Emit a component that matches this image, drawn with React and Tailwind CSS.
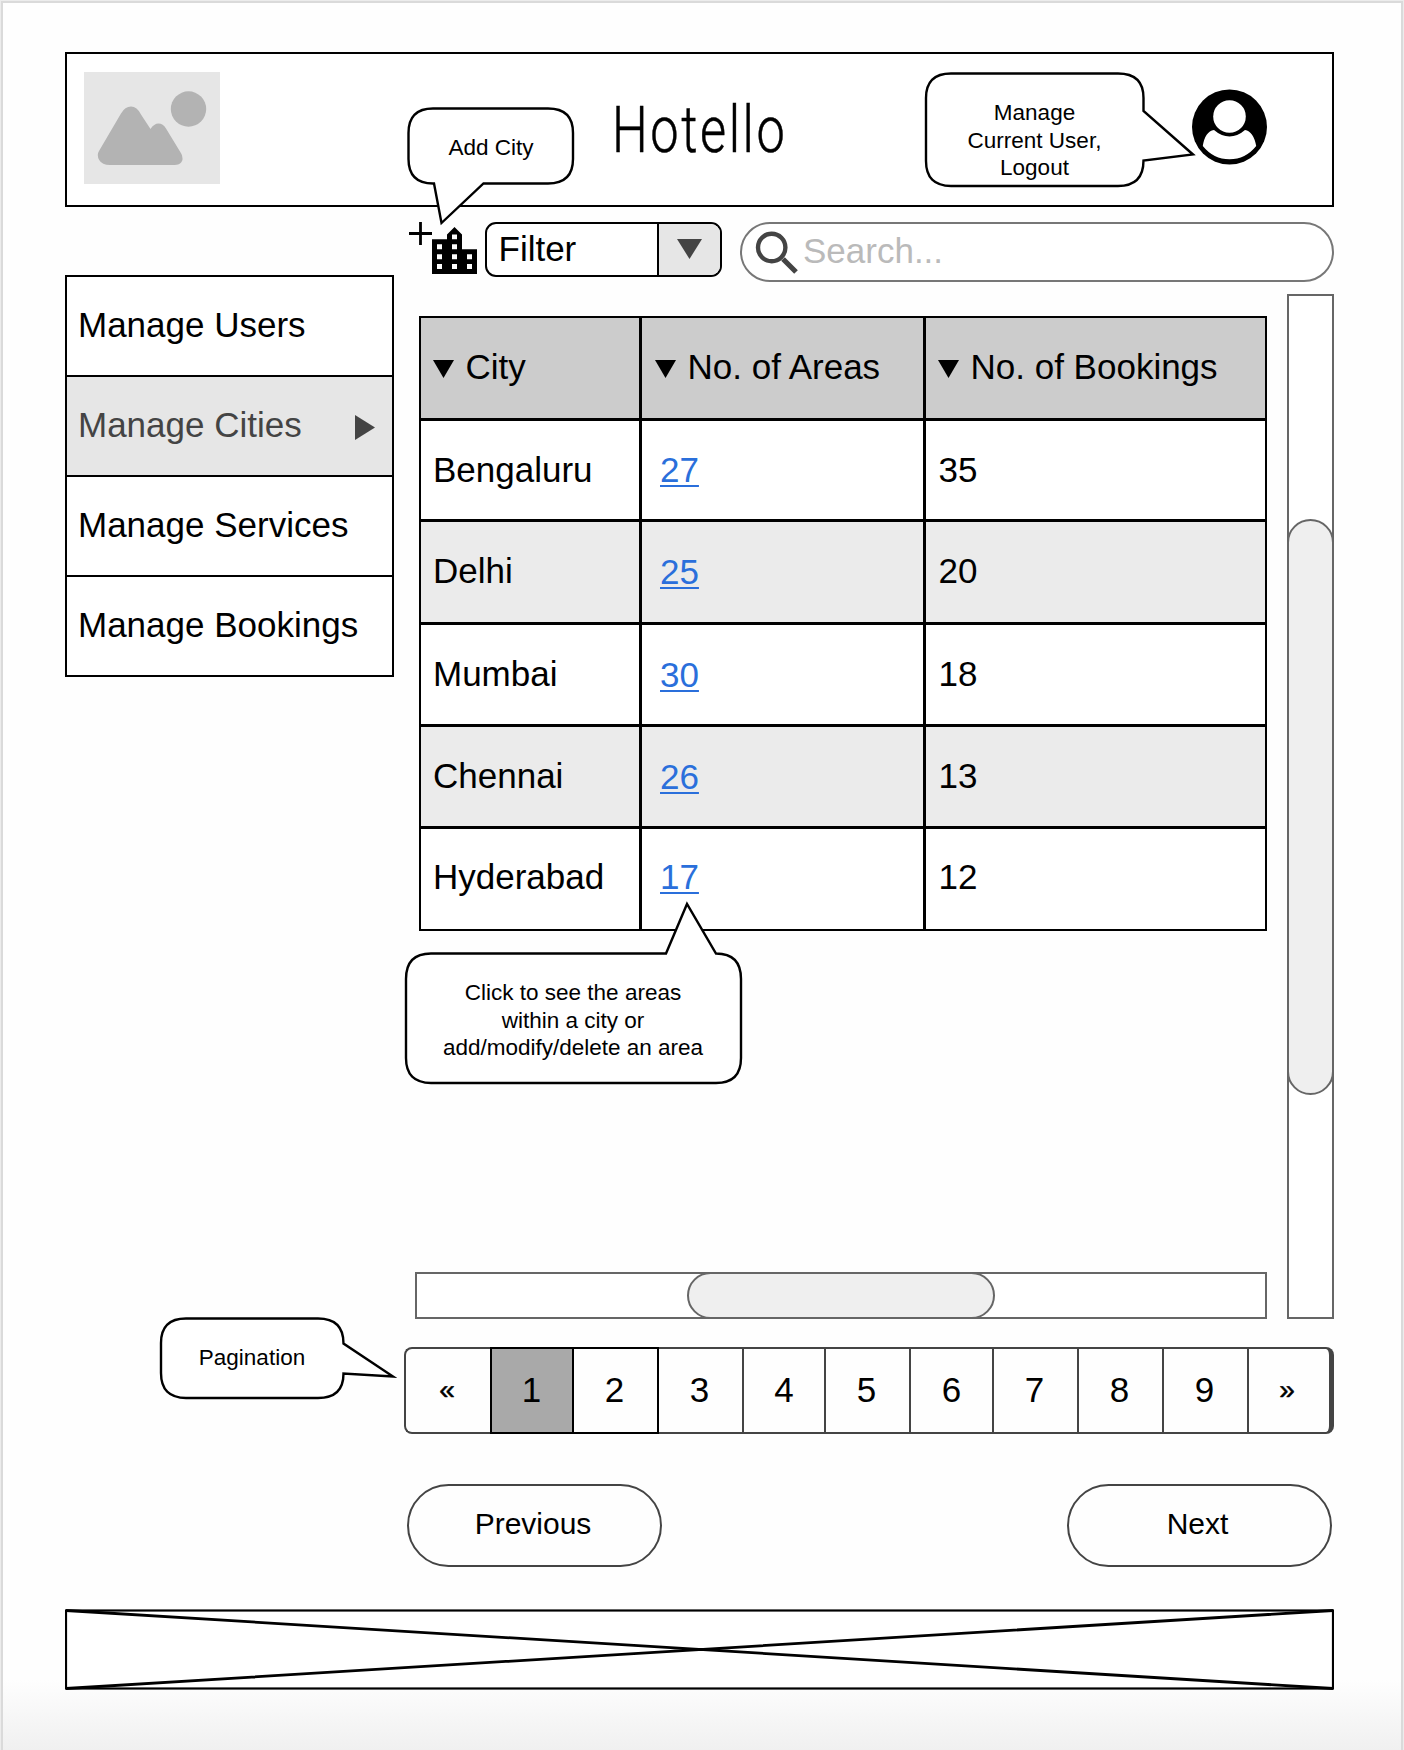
import React from 'react';
import { MdLocationCity } from 'react-icons/md';

const menu = [
  { label: 'Manage Users' },
  { label: 'Manage Cities', active: true },
  { label: 'Manage Services' },
  { label: 'Manage Bookings' },
];

const rows = [
  { city: 'Bengaluru', areas: 27, bookings: 35, row: 'h-[101px] bg-white', text: '', link: '' },
  { city: 'Delhi', areas: 25, bookings: 20, row: 'h-[103px] bg-[#ebebeb]', text: 'pb-[2px]', link: '' },
  { city: 'Mumbai', areas: 30, bookings: 18, row: 'h-[102px] bg-white', text: 'pb-[2px]', link: '' },
  { city: 'Chennai', areas: 26, bookings: 13, row: 'h-[102px] bg-[#ebebeb]', text: 'pb-[2px]', link: 'pt-[1px]' },
  { city: 'Hyderabad', areas: 17, bookings: 12, row: 'h-[103px] bg-white', text: 'pb-[4px]', link: 'pb-[4px]' },
];

const arrow = 'text-[28px] [-webkit-text-stroke:0.5px_black]';

const pages = [
  { label: '«', cls: `w-[86px] border-l-2 rounded-l-[8px] border-[#444] pr-[2px] ${arrow}` },
  { label: '1', cls: 'w-[84px] border-x-2 border-black bg-[#a9a9a9] pr-[1px]' },
  { label: '2', cls: 'w-[85px] border-r-2 border-black pr-[2px]' },
  { label: '3', cls: 'w-[85px] border-r-2 border-[#444] pr-[2px]' },
  { label: '4', cls: 'w-[82px] border-r-2 border-[#444]' },
  { label: '5', cls: 'w-[85px] border-r-2 border-[#444] pr-[2px]' },
  { label: '6', cls: 'w-[83px] border-r-2 border-[#444]' },
  { label: '7', cls: 'w-[85px] border-r-2 border-[#444] pr-[2px]' },
  { label: '8', cls: 'w-[85px] border-r-2 border-[#444] pr-[2px]' },
  { label: '9', cls: 'w-[85px] border-r-2 border-[#444] pr-[2px]' },
  { label: '»', cls: `w-[85px] border-r-[5px] rounded-r-[8px] border-[#444] pr-[4px] ${arrow}` },
];

function Callout({ className, width, height, path, textClass, children }) {
  return (
    <div className={`absolute ${className}`}>
      <svg width={width} height={height} viewBox={`0 0 ${width} ${height}`} className="block">
        <path d={path} fill="white" stroke="black" strokeWidth="2.4" />
      </svg>
      <div className={`absolute text-center text-[22.5px] leading-[27.6px] whitespace-nowrap ${textClass}`}>
        {children}
      </div>
    </div>
  );
}

function HeaderCell({ children, className }) {
  return (
    <div className={`flex items-center border-black pb-[2px] ${className}`}>
      <svg width="21" height="18" viewBox="0 0 21 18" className="mt-[4px] mr-[11.5px] shrink-0">
        <path d="M0 0H21L10.5 18Z" />
      </svg>
      <span>{children}</span>
    </div>
  );
}

export default function App() {
  return (
    <div className="relative h-[1750px] w-[1404px] overflow-hidden bg-[#ececec] pt-[1px] pr-[1px] pl-[1px] font-['Liberation_Sans',Arial,sans-serif] text-[35px] leading-[40px] text-black">
      <div className="h-full border-x-2 border-t-2 border-[#dadada] bg-linear-to-b from-[#fefefe] from-[96%] to-[#f0f0f0] pt-[49px] pl-[62px]">
        <header className="flex h-[155px] w-[1269px] border-2 border-black bg-white pt-[18px] pl-[17px]">
          <svg width="136" height="112" viewBox="84 72 136 112">
            <rect x="84" y="72" width="136" height="112" fill="#e6e6e6" />
            <circle cx="188.5" cy="109" r="17.7" fill="#b3b3b3" />
            <path
              d="M99 151L121 113.500Q125 106.500 131 106.500T141 114.500L150.500 129Q154 123.500 158.500 123.500T166 128.500L181.500 154Q183.500 159 181.500 162T174.500 165H110Q102 165 99.200 160T99 151Z"
              fill="#b3b3b3"
            />
          </svg>
          <h1 className="mt-[22px] ml-[392px] w-[180px] origin-left scale-x-[0.78] font-['Roboto'] text-[64.7px] leading-[72px] font-light tracking-[3.3px] whitespace-nowrap [-webkit-text-stroke:0.5px_black]">
            Hotello
          </h1>
          <svg width="76" height="76" viewBox="0 0 76 76" className="mt-[17px] ml-[399px]">
            <circle cx="38.500" cy="38" r="37.5" />
            <circle cx="38.500" cy="27.500" r="16.300" fill="white" />
            <path
              d="M23 41Q30.500 47.500 38.500 47.500T54 41Q62.500 42.500 65.200 57Q54.500 70.300 38.500 70.300T11.800 57Q14 42.500 23 41Z"
              fill="white"
            />
          </svg>
        </header>

        <div className="flex">
          <nav className="mt-[68px] w-[329px] self-start border-x-2 border-b-2 border-black">
            {menu.map((item) => (
              <div
                key={item.label}
                className={`flex h-[100px] items-center justify-between border-t-2 border-black pr-[17px] pb-[2px] pl-[11px] ${
                  item.active ? 'bg-[#e6e6e6] text-[#444]' : 'bg-white'
                }`}
              >
                <span>{item.label}</span>
                {item.active && (
                  <svg width="20" height="25" viewBox="0 0 20 25" className="mt-[5px]">
                    <path d="M0 0L20 12.500L0 25Z" fill="#444" />
                  </svg>
                )}
              </div>
            ))}
          </nav>

          <main className="ml-[10px] w-[930px] pt-[15px]">
            <div className="flex h-[60px] items-start">
              <svg width="23" height="23" viewBox="0 0 23 23" className="ml-[5px]">
                <path d="M0 11.500H23M11.500 0V23" stroke="black" strokeWidth="2.800" />
              </svg>
              <MdLocationCity viewBox="3 2 18 19" preserveAspectRatio="none" className="mt-[5px] h-[47px] w-[45px]" />
              <div className="ml-[8px] flex h-[55px] w-[237px] overflow-hidden rounded-[11px] border-2 border-black bg-white">
                <div className="flex flex-1 items-center pb-[2px] pl-[11.5px]">Filter</div>
                <div className="flex w-[63px] justify-center border-l-2 border-black bg-[#e6e6e6] pt-[15px]">
                  <svg width="25" height="20" viewBox="0 0 25 20">
                    <path d="M0 0H25L12.500 20Z" fill="#444" />
                  </svg>
                </div>
              </div>
              <div className="ml-[18px] flex h-[60px] flex-1 items-center rounded-full border-2 border-[#777] bg-white pl-[13px] text-[#bababa]">
                <svg width="44" height="44" viewBox="0 0 44 44">
                  <circle cx="16.700" cy="17.500" r="13.700" fill="none" stroke="#444" strokeWidth="4.400" />
                  <path d="M28 29L41 42" stroke="#444" strokeWidth="5.200" />
                </svg>
                <span className="ml-[4px] pb-[2px]">Search...</span>
              </div>
            </div>

            <div className="flex justify-between">
              <div className="w-[863px]">
                <div className="mt-[34px] ml-[15px] w-[848px] border-x-2 border-b-2 border-black">
                  <div className="grid h-[102px] grid-cols-[218px_284px_1fr] border-t-2 border-black bg-[#ccc]">
                    <HeaderCell className="pl-[12px]">City</HeaderCell>
                    <HeaderCell className="border-l-3 pl-[13px]">No. of Areas</HeaderCell>
                    <HeaderCell className="border-l-3 pl-[12px]">No. of Bookings</HeaderCell>
                  </div>
                  {rows.map((r) => (
                    <div key={r.city} className={`grid grid-cols-[218px_284px_1fr] border-t-3 border-black ${r.row}`}>
                      <div className={`flex items-center pl-[12px] ${r.text}`}>{r.city}</div>
                      <div className={`flex items-center border-l-3 border-black pl-[18px] ${r.link}`}>
                        <a className="text-[#2a6fdb] underline decoration-2 underline-offset-[3px] [text-decoration-skip-ink:none]">
                          {r.areas}
                        </a>
                      </div>
                      <div className={`flex items-center border-l-3 border-black pl-[12.5px] ${r.text}`}>{r.bookings}</div>
                    </div>
                  ))}
                </div>
                <div className="mt-[341px] ml-[11px] h-[47px] w-[852px] border-2 border-[#666] bg-white">
                  <div className="-mt-[2px] ml-[270px] h-[47px] w-[308px] rounded-full border-2 border-[#666] bg-[#efefef]" />
                </div>
              </div>
              <div className="mt-[12px] h-[1025px] w-[47px] border-2 border-[#666] bg-white">
                <div className="mt-[223px] -ml-[2px] h-[576px] w-[47px] rounded-full border-2 border-[#666] bg-[#efefef]" />
              </div>
            </div>

            <div className="mt-[28px] flex h-[87px]">
              {pages.map((p) => (
                <div key={p.label} className={`flex items-center justify-center border-y-2 pb-[1px] ${p.cls}`}>
                  {p.label}
                </div>
              ))}
            </div>

            <div className="mt-[50px] flex justify-between pr-[2px] pl-[3px] text-[30px]">
              <div className="flex h-[83px] w-[255px] items-center justify-center rounded-full border-2 border-[#444] pr-[3px] pb-[3px]">
                Previous
              </div>
              <div className="flex h-[83px] w-[265px] items-center justify-center rounded-full border-2 border-[#444] pr-[4px] pb-[3px]">
                Next
              </div>
            </div>
          </main>
        </div>

        <footer className="mt-[42px]">
          <svg width="1269" height="81" viewBox="0 0 1269 81" className="block">
            <rect x="1" y="1.500" width="1267" height="78" fill="white" stroke="black" strokeWidth="2.200" />
            <path d="M1 1.500L1268 79.500M1 79.500L1268 1.500" stroke="black" strokeWidth="2.800" />
          </svg>
        </footer>
      </div>

      <Callout
        className="top-[106px] left-[406px]"
        width={170}
        height={120}
        path="M27 2.500H142Q167 2.500 167 27V53Q167 77.500 142 77.500H77.500L35.500 117L28 77.500H27Q2.500 77.500 2.500 53V27Q2.500 2.500 27 2.500Z"
        textClass="top-[28px] left-0 w-[170px]"
      >
        Add City
      </Callout>

      <Callout
        className="top-[71px] left-[924px]"
        width={274}
        height={118}
        path="M27 2.500H194Q219.500 2.500 219.500 27V40L269 83.500L219.500 89.500Q219.500 115 194 115H27Q2 115 2 90V27Q2 2.500 27 2.500Z"
        textClass="top-[28px] left-0 w-[221px]"
      >
        <div>Manage</div>
        <div>Current User,</div>
        <div>Logout</div>
      </Callout>

      <Callout
        className="top-[900px] left-[404px]"
        width={340}
        height={186}
        path="M27 53.500H262L283 4L312 53.500Q337 53.500 337 79V158Q337 183 312 183H27Q2 183 2 158V79Q2 53.500 27 53.500Z"
        textClass="top-[79px] left-0 w-[338px]"
      >
        <div>Click to see the areas</div>
        <div>within a city or</div>
        <div>add/modify/delete an area</div>
      </Callout>

      <Callout
        className="top-[1316px] left-[159px]"
        width={240}
        height={86}
        path="M27 2.500H159Q184.500 2.500 184.500 27.500L234 60.500L184.500 57.500Q184.500 82 159 82H27Q2 82 2 57V27Q2 2.500 27 2.500Z"
        textClass="top-[28px] left-0 w-[186px]"
      >
        Pagination
      </Callout>
    </div>
  );
}
